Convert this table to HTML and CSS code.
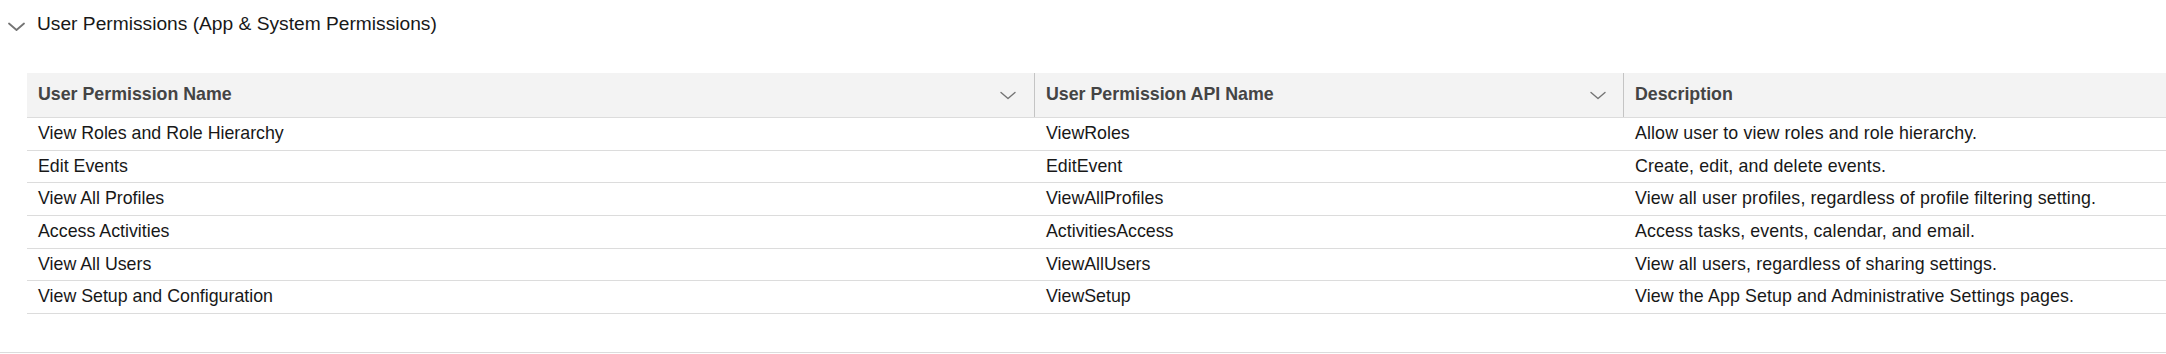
FILE: index.html
```html
<!DOCTYPE html>
<html lang="en">
<head>
<meta charset="utf-8">
<title>User Permissions</title>
<link rel="stylesheet" href="styles.css">
</head>
<body>
<section class="section">
  <div class="section-title">
    <svg class="title-chevron" width="18" height="10" viewBox="0 0 18 10" aria-hidden="true">
      <polyline points="1,1.5 8.5,8 16,1.5" fill="none" stroke="#747474" stroke-width="1.8" stroke-linecap="round" stroke-linejoin="round"/>
    </svg>
    <span class="title-text">User Permissions (App &amp; System Permissions)</span>
  </div>
  <div class="table">
    <div class="row head">
      <div class="hcell"><span>User Permission Name</span>
        <svg class="col-chevron" width="16" height="9" viewBox="0 0 16 9" aria-hidden="true"><polyline points="1,1.5 8,7.5 15,1.5" fill="none" stroke="#747474" stroke-width="1.4" stroke-linecap="round" stroke-linejoin="round"/></svg>
      </div>
      <div class="hcell sep"><span>User Permission API Name</span>
        <svg class="col-chevron" width="16" height="9" viewBox="0 0 16 9" aria-hidden="true"><polyline points="1,1.5 8,7.5 15,1.5" fill="none" stroke="#747474" stroke-width="1.4" stroke-linecap="round" stroke-linejoin="round"/></svg>
      </div>
      <div class="hcell sep"><span>Description</span></div>
    </div>
    <div class="row"><div class="cell">View Roles and Role Hierarchy</div><div class="cell c2">ViewRoles</div><div class="cell c3">Allow user to view roles and role hierarchy.</div></div>
    <div class="row"><div class="cell">Edit Events</div><div class="cell c2">EditEvent</div><div class="cell c3">Create, edit, and delete events.</div></div>
    <div class="row"><div class="cell">View All Profiles</div><div class="cell c2">ViewAllProfiles</div><div class="cell c3">View all user profiles, regardless of profile filtering setting.</div></div>
    <div class="row"><div class="cell">Access Activities</div><div class="cell c2">ActivitiesAccess</div><div class="cell c3">Access tasks, events, calendar, and email.</div></div>
    <div class="row"><div class="cell">View All Users</div><div class="cell c2">ViewAllUsers</div><div class="cell c3">View all users, regardless of sharing settings.</div></div>
    <div class="row"><div class="cell">View Setup and Configuration</div><div class="cell c2">ViewSetup</div><div class="cell c3">View the App Setup and Administrative Settings pages.</div></div>
  </div>
</section>
</body>
</html>
```
FILE: styles.css
```css
html, body {
  margin: 0;
  padding: 0;
  background: #ffffff;
}
body {
  font-family: "Liberation Sans", Arial, sans-serif;
  color: #181818;
  width: 2166px;
  overflow: hidden;
}
.section {
  height: 353px;
  box-sizing: border-box;
  border-bottom: 1px solid #dcdcdc;
}
.section-title {
  display: flex;
  align-items: center;
  padding-top: 12px;
  padding-left: 8px;
  height: 24px;
}
.title-chevron {
  display: block;
  margin-top: 5px;
  margin-right: 11px;
}
.title-text {
  font-size: 19.2px;
  line-height: 24px;
  color: #181818;
}
.table {
  margin-top: 37px;
  margin-left: 27px;
}
.row {
  display: grid;
  grid-template-columns: 1007px 589px 1fr;
  height: 32.667px;
  box-sizing: border-box;
  border-bottom: 1px solid #dcdcdc;
}
.row.head {
  height: 45px;
  background: #f3f3f3;
}
.hcell {
  display: flex;
  justify-content: space-between;
  align-items: flex-start;
  padding: 11px 18px 0 11px;
  font-size: 17.8px;
  line-height: 20px;
  font-weight: bold;
  color: #444444;
}
.hcell.sep {
  border-left: 1px solid #c4c4c4;
  padding-right: 17px;
}
.col-chevron {
  display: block;
  margin-top: 7px;
}
.cell {
  padding: 5px 0 0 11px;
  font-size: 17.8px;
  line-height: 20px;
  color: #181818;
  white-space: nowrap;
}
.cell.c2, .cell.c3 {
  padding-left: 12px;
}
.cell.c3 {
  letter-spacing: 0.12px;
}
```
